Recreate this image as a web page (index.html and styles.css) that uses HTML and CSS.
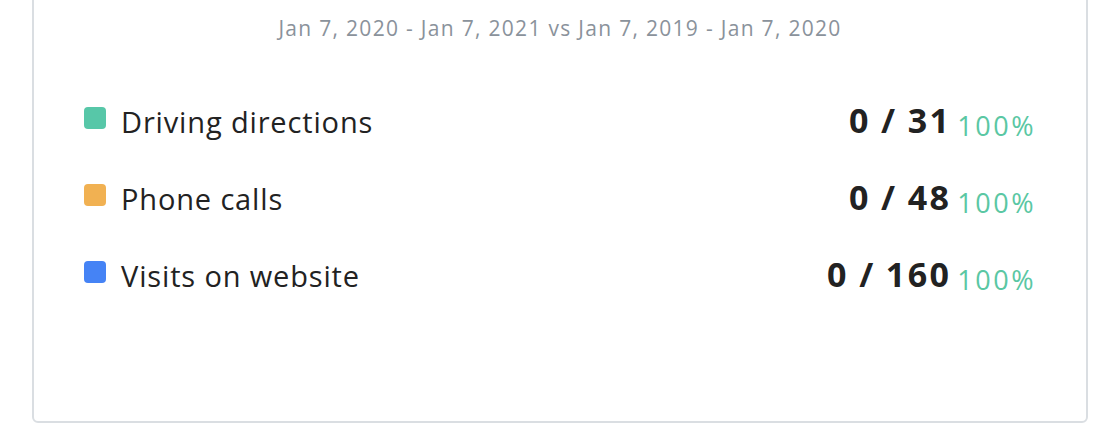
FILE: index.html
```html
<!DOCTYPE html>
<html>
<head>
<meta charset="utf-8">
<link rel="stylesheet" href="styles.css">
</head>
<body>
<div class="card">
  <div class="range">Jan 7, 2020 - Jan 7, 2021 vs Jan 7, 2019 - Jan 7, 2020</div>
  <ul class="rows">
    <li class="row">
      <span class="swatch swatch-green"></span>
      <span class="label">Driving directions</span>
      <span class="value">0 / 31</span>
      <span class="change">100%</span>
    </li>
    <li class="row">
      <span class="swatch swatch-orange"></span>
      <span class="label">Phone calls</span>
      <span class="value">0 / 48</span>
      <span class="change">100%</span>
    </li>
    <li class="row">
      <span class="swatch swatch-blue"></span>
      <span class="label">Visits on website</span>
      <span class="value">0 / 160</span>
      <span class="change">100%</span>
    </li>
  </ul>
</div>
</body>
</html>
```

FILE: styles.css
```css
html, body {
  margin: 0;
  padding: 0;
  background: #ffffff;
}

body {
  font-family: "Open Sans", "Noto Sans", sans-serif;
  color: #222222;
}

.card {
  box-sizing: border-box;
  margin: -30px 0 0 32px;
  width: 1056px;
  height: 453px;
  border: 2px solid #dadee2;
  border-radius: 6px;
  padding: 41px 50px 0 50px;
}

.range {
  text-align: center;
  font-size: 21px;
  line-height: 30px;
  letter-spacing: 1.3px;
  color: #8a929b;
}

.rows {
  list-style: none;
  margin: 54px 0 0 0;
  padding: 0;
  display: flex;
  flex-direction: column;
  gap: 37px;
}

.row {
  display: flex;
  align-items: baseline;
  height: 40px;
}

.swatch {
  width: 22px;
  height: 22px;
  border-radius: 4px;
  flex: none;
  align-self: center;
  position: relative;
  top: 1px;
}

.swatch-green { background: #57c7a8; }
.swatch-orange { background: #f1b152; }
.swatch-blue { background: #4583f5; }

.label {
  margin-left: 15px;
  font-size: 29px;
  letter-spacing: 0.85px;
  flex: 1;
}

.value {
  font-size: 34px;
  font-weight: 700;
  letter-spacing: 2.4px;
  word-spacing: -1px;
}

.change {
  margin-left: 6px;
  font-size: 27px;
  letter-spacing: 2.5px;
  color: #5ac7a3;
  position: relative;
  top: 3px;
}
```
